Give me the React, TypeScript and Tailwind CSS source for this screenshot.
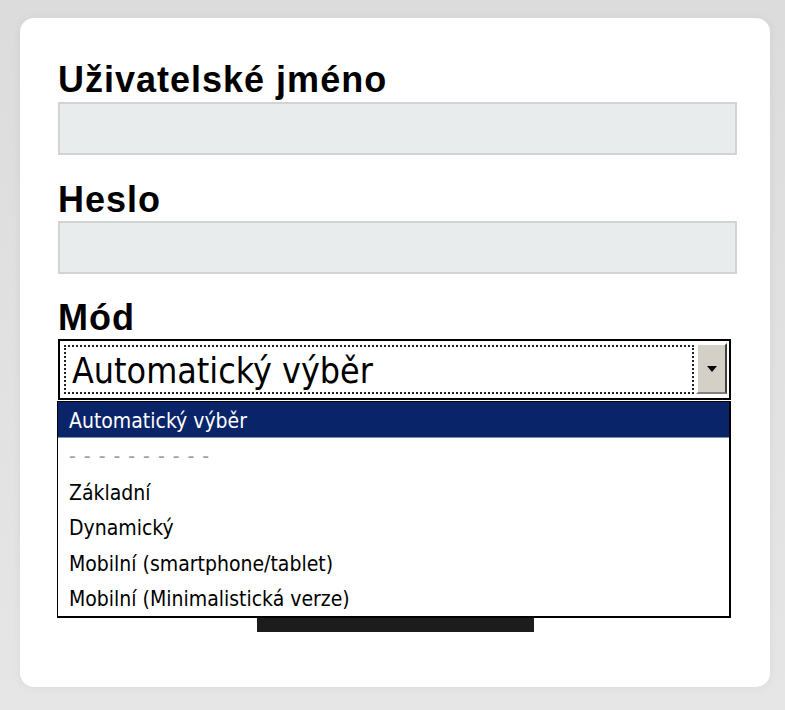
const labelCls =
  'block font-["Liberation_Sans",Arial,sans-serif] text-[36px] leading-[40px] font-bold tracking-[1px] text-black';

const options = ['Základní', 'Dynamický', 'Mobilní (smartphone/tablet)', 'Mobilní (Minimalistická verze)'];

function ComboArrow() {
  return (
    <svg width="10" height="6" viewBox="0 0 10 6">
      <path d="M0 0 H10 L5 6 Z" fill="#000" />
    </svg>
  );
}

export default function App() {
  return (
    <div className="min-h-[710px] w-[785px] bg-gradient-to-b from-[#dcdcdc] to-[#e6e6e6] pt-[18px] pl-5">
      <div className="w-[750px] h-[669px] rounded-[14px] bg-white pl-[38px] pr-[33px] pt-[42px] shadow-[0_0_10px_rgba(0,0,0,0.06)]">
        <label className={labelCls}>Uživatelské jméno</label>
        <div className="mt-[2px] h-[53px] border-2 border-[#d2d4d4] bg-[#e9eced]" />

        <label className={`${labelCls} mt-[25px]`}>Heslo</label>
        <div className="mt-[1px] h-[53px] border-2 border-[#d2d4d4] bg-[#e9eced]" />

        <label className={`${labelCls} mt-[24px]`}>Mód</label>
        <div className="relative mt-[1px]">
          <div className="flex h-[61px] w-[673px] border-2 border-black bg-white p-[4px]">
            <div className="flex flex-1 items-center border-2 border-dotted border-[#222] pl-[6px] pt-[2px] font-['DejaVu_Sans_Condensed','DejaVu_Sans',sans-serif] text-[35.5px] text-black">
              Automatický výběr
            </div>
            <div className="ml-[2px] -mt-[2px] -mr-[2px] flex w-[31px] items-center justify-center border-2 border-t-white border-l-white border-r-[#404040] border-b-[#808080] bg-[#d4d0c8]">
              <ComboArrow />
            </div>
          </div>

          <div className="absolute left-[-1px] top-[62px] z-10 w-[674px] border border-r-2 border-b-2 border-black bg-white font-['DejaVu_Sans_Condensed','DejaVu_Sans',sans-serif] text-[21px] text-black">
            <div className="flex h-[36px] items-center border-b border-[#7d8fb8] bg-[#0a246a] pl-[11px] pt-[4px] text-white">
              Automatický výběr
            </div>
            <div className="flex h-[35.5px] items-center pl-[11px] pt-[2px] text-[#a0a0a0] tracking-[1px]">- - - - - - - - - -</div>
            {options.map((o) => (
              <div key={o} className="flex h-[35.5px] items-center pl-[11px] pt-[4px]">
                {o}
              </div>
            ))}
          </div>

          <div className="mt-[192px] flex justify-center pr-[4px]">
            <button type="button" className="h-[40px] w-[277px] bg-[#1c1c1c]" />
          </div>
        </div>
      </div>
    </div>
  );
}
